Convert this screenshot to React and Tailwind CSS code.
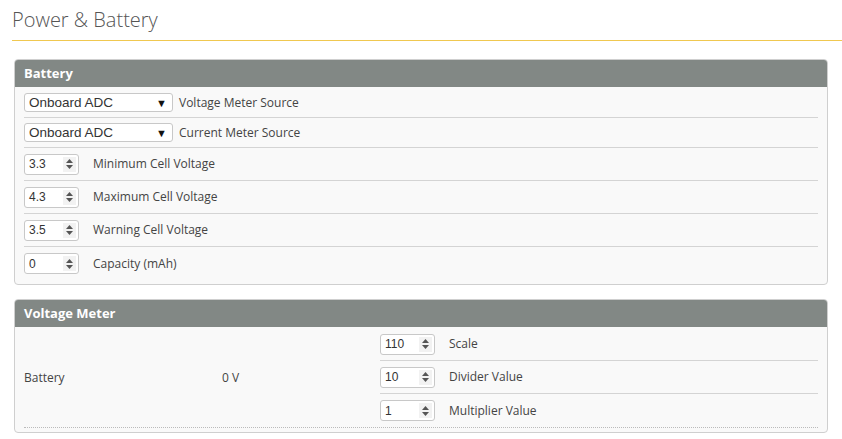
import React from "react";

const font = { fontFamily: '"Open Sans", "Liberation Sans", sans-serif' };

const Spinner = () => (
  <div className="flex flex-col items-center justify-center w-[13px] h-full bg-[#f2f2f2] gap-[2px]">
    <svg width="7" height="4" viewBox="0 0 7 4"><path d="M0 4 L3.5 0 L7 4 Z" fill="#555" /></svg>
    <svg width="7" height="4" viewBox="0 0 7 4"><path d="M0 0 L3.5 4 L7 0 Z" fill="#555" /></svg>
  </div>
);

const NumberInput = ({ value }) => (
  <div className="flex items-center w-[55px] h-[21px] bg-white border border-[#c8c8c8] rounded-[3px] pl-[4px] pr-[2px] py-[2px]">
    <span className="flex-1 text-[12px] text-[#333] leading-none font-['Liberation_Sans',sans-serif]">{value}</span>
    <Spinner />
  </div>
);

const Select = ({ value }) => (
  <div className="flex items-center justify-between w-[149px] h-[19px] bg-white border border-[#c8c8c8] rounded-[3px] pl-[4px] pr-[5px]">
    <span className="text-[13.5px] text-[#333] leading-none font-['Liberation_Sans',sans-serif]">{value}</span>
    <span className="text-[11px] text-[#111] leading-none">▼</span>
  </div>
);

const Panel = ({ title, children }) => (
  <div className="mx-[14px] border border-[#cfcfcf] rounded-[4px] bg-[#f9f9f9] overflow-hidden">
    <div className="h-[27px] bg-[#828885] flex items-center px-[9px]">
      <span className="text-white text-[13px] font-bold">{title}</span>
    </div>
    {children}
  </div>
);

export default function App() {
  const selectRows = [
    ["Onboard ADC", "Voltage Meter Source"],
    ["Onboard ADC", "Current Meter Source"],
  ];
  const numRows = [
    ["3.3", "Minimum Cell Voltage"],
    ["4.3", "Maximum Cell Voltage"],
    ["3.5", "Warning Cell Voltage"],
    ["0", "Capacity (mAh)"],
  ];
  const meterRows = [
    ["110", "Scale"],
    ["10", "Divider Value"],
    ["1", "Multiplier Value"],
  ];

  return (
    <div className="w-[842px] h-[439px] bg-white overflow-hidden" style={font}>
      <div className="ml-[12px] pt-[6px] h-[41px] border-b border-[#f0c850]">
        <h1 className="text-[20px] font-light text-[#555] leading-[28px]">Power &amp; Battery</h1>
      </div>

      <div className="mt-[18px]">
        <Panel title="Battery">
          <div className="px-[9px] pb-[4px]">
            {selectRows.map(([v, label], i) => (
              <div key={label} className={`flex items-center gap-[6px] border-b border-[#d4d4d4] ${i === 0 ? "h-[31px] pt-[1px]" : "h-[30px]"}`}>
                <Select value={v} />
                <span className="text-[12px] text-[#444]">{label}</span>
              </div>
            ))}
            {numRows.map(([v, label], i) => (
              <div key={label} className={`flex items-center gap-[14px] h-[33px] ${i < numRows.length - 1 ? "border-b border-[#d4d4d4]" : ""}`}>
                <NumberInput value={v} />
                <span className="text-[12px] text-[#444]">{label}</span>
              </div>
            ))}
          </div>
        </Panel>
      </div>

      <div className="mt-[14px]">
        <Panel title="Voltage Meter">
          <div className="px-[9px] pb-[4px]">
            <div className="flex items-center border-b border-dotted border-[#bbb] pt-[1px]">
              <span className="w-[198px] text-[12px] text-[#444]">Battery</span>
              <span className="w-[158px] text-[12px] text-[#444]">0 V</span>
              <div className="flex-1">
                {meterRows.map(([v, label], i) => (
                  <div key={label} className={`flex items-center gap-[14px] h-[33px] ${i < meterRows.length - 1 ? "border-b border-[#d4d4d4]" : ""}`}>
                    <NumberInput value={v} />
                    <span className="text-[12px] text-[#444]">{label}</span>
                  </div>
                ))}
              </div>
            </div>
          </div>
        </Panel>
      </div>
    </div>
  );
}
